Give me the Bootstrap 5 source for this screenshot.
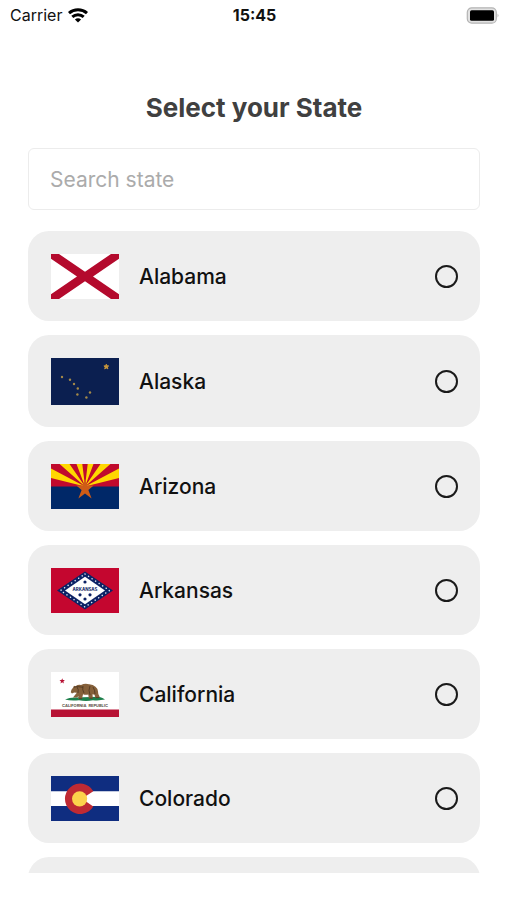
<!DOCTYPE html>
<html lang="en">
<head>
<meta charset="utf-8">
<meta name="viewport" content="width=device-width, initial-scale=1">
<title>Select your State</title>
<link href="https://cdn.jsdelivr.net/npm/bootstrap@5.3.0/dist/css/bootstrap.min.css" rel="stylesheet">
<style>
  body { font-family: Inter, "Liberation Sans", sans-serif; color: #111; background: #fff; }
  .status-bar { height: 30px; padding: 0 8px 0 10px; font-size: 16px; line-height: 30px; }
  .status-side { flex: 1 1 0; gap: 6px; }
  .screen-main { padding: 60px 27px 0 28px; min-height: 0; }
  .screen-title { font-size: 26px; line-height: 36px; font-weight: 700; color: #404040; margin-bottom: 22px; }
  .state-search { height: 62px; padding: 0 21px; font-size: 21px; border: 1px solid #ececec; border-radius: 6px; }
  .state-search::placeholder { color: #ababab; }
  .state-list { gap: 14px; margin: 21px 0 27px; min-height: 0; overflow-y: auto; scrollbar-width: none; }
  .state-list::-webkit-scrollbar { display: none; }
  .state-option { min-height: 90px; padding: 23px 22px 22px 23px; gap: 20px; background: #eee; border-radius: 21px; font-size: 21px; line-height: 28px; font-weight: 500; cursor: pointer; }
  .state-radio { appearance: none; width: 23px; height: 23px; margin: 0; border: 2px solid #1a1a1a; border-radius: 50%; }
  .state-radio:checked { background: radial-gradient(#1a1a1a 45%, transparent 50%); }
</style>
</head>
<body>
<div class="d-flex flex-column vh-100 overflow-hidden">
  <header class="status-bar d-flex align-items-center flex-shrink-0">
    <div class="status-side d-flex align-items-center">
      <span>Carrier</span>
      <svg width="20" height="15" viewBox="0 0 20 15" aria-hidden="true">
        <g fill="none" stroke="#000" stroke-width="3">
          <path d="M1 5.2C6 .7 14 .7 19 5.2"/>
          <path d="M4.3 8.9C7.6 5.9 12.4 5.9 15.7 8.9"/>
        </g>
        <path d="M10 14.6 6.9 11.4C8.6 9.8 11.4 9.8 13.1 11.4Z"/>
      </svg>
    </div>
    <strong class="fw-bold">15:45</strong>
    <div class="status-side d-flex justify-content-end">
      <svg width="33" height="17" viewBox="0 0 33 17" role="img" aria-label="Battery full">
        <rect x="1.3" y=".8" width="29" height="15.4" rx="4.5" fill="#e2e2e2" stroke="#b4b4b4" stroke-width="1.2"/>
        <rect x="4" y="3.2" width="24" height="10.6" rx="1.6"/>
        <path d="M31.6 6.4Q33.2 8.5 31.6 10.6Z" fill="#aaa"/>
      </svg>
    </div>
  </header>

  <main class="screen-main d-flex flex-column flex-grow-1">
    <h1 class="screen-title text-center">Select your State</h1>
    <input type="search" class="state-search form-control flex-shrink-0" placeholder="Search state" aria-label="Search state">

    <div class="state-list d-flex flex-column flex-grow-1" role="radiogroup" aria-label="State">
      <label class="state-option d-flex align-items-center flex-shrink-0">
        <svg width="68" height="45" viewBox="0 0 68 45" aria-hidden="true">
          <path fill="#fff" d="M0 0H68V45H0Z"/>
          <path fill="#b40a2d" d="M0 0H8L34 17.8 60 0H68V4.8L42 22.5 68 40.2V45H60L34 27.2 8 45H0V40.2L26 22.5 0 4.8Z"/>
        </svg>
        <span class="flex-grow-1">Alabama</span>
        <input class="state-radio" type="radio" name="state" value="AL">
      </label>

      <label class="state-option d-flex align-items-center flex-shrink-0">
        <svg width="68" height="47" viewBox="0 0 68 47" aria-hidden="true">
          <path fill="#0b1f50" d="M0 0H68V47H0Z"/>
          <path fill="#c8963c" d="m55.3 6.2.7 1.6 1.7.1-1.3 1.2.5 1.8-1.6-1-1.6 1 .5-1.8-1.3-1.2 1.7-.1Z" stroke="#c8963c" stroke-width=".9"/>
          <g fill="#a58a48">
            <circle cx="11" cy="19" r="1.2"/><circle cx="19" cy="21.7" r="1.2"/><circle cx="23" cy="26" r="1.2"/><circle cx="26.8" cy="30.5" r="1.2"/><circle cx="26.4" cy="36.5" r="1.2"/><circle cx="35.4" cy="39.5" r="1.2"/><circle cx="39" cy="34.5" r="1.2"/>
          </g>
        </svg>
        <span class="flex-grow-1">Alaska</span>
        <input class="state-radio" type="radio" name="state" value="AK">
      </label>

      <label class="state-option d-flex align-items-center flex-shrink-0">
        <svg width="68" height="45" viewBox="0 0 68 45" aria-hidden="true">
          <path fill="#c00a2d" d="M0 0H68V23H0Z"/>
          <path fill="#ffd800" d="M34 22.5 0 14.1V4.6ZM34 22.5 8.6 0H18.5ZM34 22.5 25.5 0H31.3ZM34 22.5 36.7 0H42.5ZM34 22.5 49.5 0H59.4ZM34 22.5 68 4.6V14.1Z"/>
          <path fill="#002868" d="M0 22.5H68V45H0Z"/>
          <path fill="#ce5c17" d="m34 15 2.2 6.6h6.4l-5.2 4.4 3.2 8.4-6.6-4.8-6.6 4.8 3.2-8.4-5.2-4.4h6.4Z"/>
        </svg>
        <span class="flex-grow-1">Arizona</span>
        <input class="state-radio" type="radio" name="state" value="AZ">
      </label>

      <label class="state-option d-flex align-items-center flex-shrink-0">
        <svg width="68" height="45" viewBox="0 0 68 45" aria-hidden="true">
          <path fill="#c4062f" d="M0 0H68V45H0Z"/>
          <path fill="#0c2265" d="M34 3.5 62 22.5 34 41.5 6 22.5Z"/>
          <path fill="none" stroke="#dfe5f2" stroke-width="1.5" stroke-linecap="round" stroke-dasharray=".1 4.15" d="M34 6 58.5 22.5 34 39 9.5 22.5Z"/>
          <path fill="#fff" d="M34 8.8 54 22.5 34 36.2 14 22.5Z"/>
          <g fill="#0c2265"><circle cx="34" cy="14" r="1.6"/><circle cx="29" cy="26.8" r="1.6"/><circle cx="39" cy="26.8" r="1.6"/><circle cx="34" cy="31" r="1.6"/></g>
          <text x="34" y="22.6" text-anchor="middle" font-size="4.4" font-weight="700" fill="#0c2265">ARKANSAS</text>
        </svg>
        <span class="flex-grow-1">Arkansas</span>
        <input class="state-radio" type="radio" name="state" value="AR">
      </label>

      <label class="state-option d-flex align-items-center flex-shrink-0">
        <svg width="68" height="45" viewBox="0 0 68 45" aria-hidden="true">
          <path fill="#fff" d="M0 0H68V45H0Z"/>
          <path fill="#b71234" d="M0 37.5H68V45H0ZM11.2 6.2l.7 1.8 2 .1-1.5 1.3.5 2-1.7-1.1-1.7 1.1.5-2-1.5-1.3 2-.1Z"/>
          <path fill="#1c7f4b" d="M14 27.6Q18 25.6 24 25.6L48 24.8Q52 26 54 27.6Q48 28.8 42 28.2Q35 29.6 28 28.2Q20 29 14 27.6Z"/>
          <path fill="#85603a" d="M19.8 20.2Q20 17.4 22 15.8L23 13.8 24.4 14.2Q27 12.4 30 12.9Q34 11.2 38 12.3Q42 12.2 44.5 14.8Q46.7 16.5 47 19.5Q46.9 22 48.5 24.6L48.2 26H44.5L43.5 22.8 41.5 22.3 41.8 26.5H37.8L37.3 22.5Q34.5 23.2 32 22.2L31 27H27.2L27.6 24.2 25.5 25.5H22L25.8 20.8 23.2 20.6 21 21.5Z"/>
          <path fill="none" stroke="#4b3520" stroke-width=".8" d="M26 15q2 2.5 1 6M32 14q-1 4 1 7M39 14q-2 4 0 9M23 15.3l3-.8 6 .8M42 15q2 3 2 7M28 26.7h3M38.5 26.2h3M44.7 25.6H48"/>
          <text x="34" y="34.6" text-anchor="middle" font-size="4" font-weight="700" fill="#5c5148" xml:space="preserve">CALIFORNIA  REPUBLIC</text>
        </svg>
        <span class="flex-grow-1">California</span>
        <input class="state-radio" type="radio" name="state" value="CA">
      </label>

      <label class="state-option d-flex align-items-center flex-shrink-0">
        <svg width="68" height="45" viewBox="0 0 68 45" aria-hidden="true">
          <path fill="#0f2d80" d="M0 0H68V45H0Z"/>
          <path fill="#fff" d="M0 15.2H68V30H0Z"/>
          <path fill="#bf2a33" d="M42.3 15.2A15.2 15.2 0 1 0 42.3 30.4L35 25.5V20Z"/>
          <path fill="#fff" d="M34 22.7 43 17.5V28Z"/>
          <circle cx="28.6" cy="22.8" r="7.6" fill="#fcd34b"/>
        </svg>
        <span class="flex-grow-1">Colorado</span>
        <input class="state-radio" type="radio" name="state" value="CO">
      </label>

      <div class="state-option flex-shrink-0" aria-hidden="true"></div>
    </div>
  </main>
</div>
<script src="https://cdn.jsdelivr.net/npm/bootstrap@5.3.0/dist/js/bootstrap.bundle.min.js"></script>
</body>
</html>
